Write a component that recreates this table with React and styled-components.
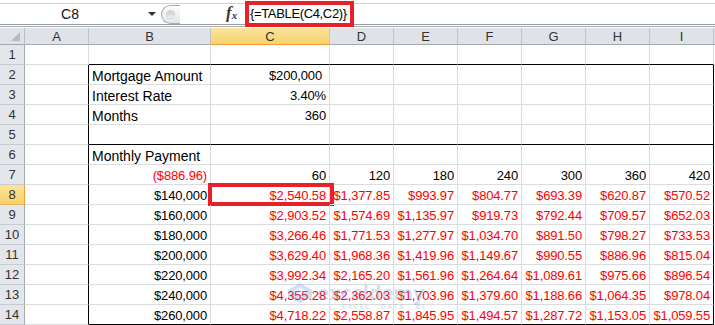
import React from 'react'
import styled, { createGlobalStyle } from 'styled-components'

const GlobalStyle = createGlobalStyle`
  html, body { margin: 0; padding: 0; background: #fff; }
  body { font-family: "Liberation Sans", Arial, sans-serif; overflow: hidden; }
`

const COLUMNS = ['A', 'B', 'C', 'D', 'E', 'F', 'G', 'H', 'I']
const TERMS = ['60', '120', '180', '240', '300', '360', '420']
const PAYMENTS = [
  ['$140,000', ['$2,540.58', '$1,377.85', '$993.97', '$804.77', '$693.39', '$620.87', '$570.52']],
  ['$160,000', ['$2,903.52', '$1,574.69', '$1,135.97', '$919.73', '$792.44', '$709.57', '$652.03']],
  ['$180,000', ['$3,266.46', '$1,771.53', '$1,277.97', '$1,034.70', '$891.50', '$798.27', '$733.53']],
  ['$200,000', ['$3,629.40', '$1,968.36', '$1,419.96', '$1,149.67', '$990.55', '$886.96', '$815.04']],
  ['$220,000', ['$3,992.34', '$2,165.20', '$1,561.96', '$1,264.64', '$1,089.61', '$975.66', '$896.54']],
  ['$240,000', ['$4,355.28', '$2,362.03', '$1,703.96', '$1,379.60', '$1,188.66', '$1,064.35', '$978.04']],
  ['$260,000', ['$4,718.22', '$2,558.87', '$1,845.95', '$1,494.57', '$1,287.72', '$1,153.05', '$1,059.55']],
]

const label = text => ({ text })
const num = (text, red = false, extra = {}) => ({ text, num: true, align: 'right', red, ...extra })

// content of row r, columns A..I
function rowCells(r) {
  const cells = Array(9).fill(null).map(() => ({}))
  if (r === 2) { cells[1] = label('Mortgage Amount'); cells[2] = num('$200,000', false, { trail: true }) }
  if (r === 3) { cells[1] = label('Interest Rate'); cells[2] = num('3.40%') }
  if (r === 4) { cells[1] = label('Months'); cells[2] = num('360') }
  if (r === 6) { cells[1] = label('Monthly Payment') }
  if (r === 7) {
    cells[1] = num('($886.96)', true)
    TERMS.forEach((t, i) => { cells[i + 2] = num(t) })
  }
  if (r >= 8) {
    const [amount, values] = PAYMENTS[r - 8]
    cells[1] = num(amount)
    values.forEach((v, i) => { cells[i + 2] = num(v, true, { mark: r === 8 && i === 0 }) })
  }
  cells.forEach((c, i) => {
    c.rb = r >= 2 && (i === 0 || i === 8)
    c.bb = i >= 1 && (r === 1 || r === 5 || r === 14)
  })
  return cells
}

const Page = styled.div`
  position: relative;
  width: 715px;
  height: 325px;
  overflow: hidden;
`

const TopBar = styled.div`
  height: 27px;
  box-sizing: border-box;
  padding-top: 3px;
  border-bottom: 1px solid #a7abb0;
`

const BarInner = styled.div`
  display: flex;
  align-items: center;
  height: 22px;
  box-sizing: border-box;
  border-top: 1px solid #cfd2d6;
  border-bottom: 1px solid #9b9fa5;
`

const NameBox = styled.div`
  display: flex;
  align-items: center;
  width: 157px;
  height: 100%;
`

const NameText = styled.span`
  width: 140px;
  text-align: center;
  font-size: 14px;
  color: #111;
`

const DropArrow = styled.span`
  margin-left: 8px;
  width: 0;
  height: 0;
  border-left: 4px solid transparent;
  border-right: 4px solid transparent;
  border-top: 4px solid #333;
`

const Splitter = styled.div`
  position: relative;
  margin-left: 4px;
  width: 19px;
  height: 19px;
  box-sizing: border-box;
  border: 1px solid #a8acb2;
  border-right: none;
  border-radius: 10px 0 0 10px;
  background: linear-gradient(#fdfdfd, #e3e5e8);
  &::after {
    content: '';
    position: absolute;
    left: 5px;
    top: 5px;
    width: 7px;
    height: 7px;
    border-radius: 50%;
    background: linear-gradient(#c9ccd0, #eceef0);
    box-shadow: 0 0 0 1px #d2d5d9;
  }
`

const Fx = styled.span`
  margin-left: 46px;
  width: 17px;
  font-family: "Liberation Serif", "Times New Roman", serif;
  font-style: italic;
  font-weight: bold;
  font-size: 17px;
  line-height: 18px;
  color: #3a3a3a;
  i { font-style: italic; }
  sub { font-size: 11px; vertical-align: -1px; }
`

const FormulaField = styled.div`
  position: relative;
  height: 20px;
  margin-left: 2px;
  padding-left: 5px;
  font-size: 13px;
  letter-spacing: -0.35px;
  line-height: 20px;
  color: #000;
`

const Highlight = styled.span`
  position: absolute;
  left: 0;
  top: -3px;
  width: 109px;
  height: 26px;
  box-sizing: border-box;
  border: 4px solid #e8202a;
`

const Sheet = styled.div`
  display: grid;
  grid-template-columns: 25px 64px 122px 119px repeat(6, 64px) 1fr;
  grid-template-rows: 17px repeat(14, 20px);
  margin-top: 1px;
`

const Corner = styled.div`
  position: relative;
  box-sizing: border-box;
  background: #dfe3e8;
  border-right: 1px solid #b9bec5;
  border-bottom: 1px solid #a3a9b1;
  &::after {
    content: '';
    position: absolute;
    right: 4px;
    bottom: 3px;
    border-left: 9px solid transparent;
    border-bottom: 9px solid #b7bbc1;
  }
`

const ColHead = styled.div`
  box-sizing: border-box;
  display: flex;
  align-items: center;
  justify-content: center;
  font-size: 13px;
  color: #333;
  background: ${p => (p.$active ? 'linear-gradient(#fae49c, #f7d26c)' : '#dfe3e8')};
  border-right: 1px solid ${p => (p.$active ? '#f2c36c' : '#bfc4cb')};
  border-bottom: 1px solid ${p => (p.$active ? '#f29b38' : '#a3a9b1')};
`

const RowHead = styled.div`
  box-sizing: border-box;
  display: flex;
  align-items: center;
  justify-content: center;
  font-size: 13px;
  color: #333;
  background: ${p => (p.$active ? 'linear-gradient(#fae49c, #f7d26c)' : '#e3e6ea')};
  border-right: 1px solid ${p => (p.$active ? '#f29b38' : '#a3a9b1')};
  border-bottom: 1px solid ${p => (p.$active ? '#f2b45a' : '#c8ccd2')};
`

const Cell = styled.div`
  position: relative;
  box-sizing: border-box;
  display: flex;
  align-items: flex-end;
  justify-content: ${p => (p.$align === 'right' ? 'flex-end' : 'flex-start')};
  padding: 0 ${p => (p.$trail ? '7px' : '3px')} 0 3px;
  border-right: 1px solid ${p => (p.$rb ? '#000' : '#dadcdd')};
  border-bottom: 1px solid ${p => (p.$bb ? '#000' : '#dadcdd')};
  font-size: ${p => (p.$num ? '13px' : '14px')};
  letter-spacing: ${p => (p.$num ? '-0.15px' : '0')};
  line-height: 16px;
  color: ${p => (p.$red ? '#ff0000' : '#000')};
  white-space: nowrap;
`

const CellMark = styled.span`
  position: absolute;
  left: -3px;
  top: -2px;
  width: 126px;
  height: 23px;
  box-sizing: border-box;
  border: 4px solid #e8202a;
`

const Watermark = styled.div`
  position: absolute;
  left: 287px;
  top: 282px;
  display: flex;
  gap: 3px;
  opacity: 0.28;
  pointer-events: none;
  color: #5b8fdc;
`

const WaterText = styled.div`
  display: flex;
  flex-direction: column;
  align-items: center;
  font-family: "Open Sans", sans-serif;
  font-weight: bold;
  font-size: 20px;
  line-height: 21px;
  small {
    font-size: 7px;
    line-height: 8px;
    letter-spacing: 1.5px;
    color: #8fa3bd;
    margin-left: 26px;
  }
`

export default function App() {
  const rows = Array.from({ length: 14 }, (_, i) => i + 1)
  return (
    <>
      <GlobalStyle />
      <Page>
        <TopBar>
          <BarInner>
            <NameBox>
              <NameText>C8</NameText>
              <DropArrow />
            </NameBox>
            <Splitter />
            <Fx><i>f</i><sub>x</sub></Fx>
            <FormulaField>
              {'{=TABLE(C4,C2)}'}
              <Highlight />
            </FormulaField>
          </BarInner>
        </TopBar>
        <Sheet>
          <Corner />
          {COLUMNS.map(c => (
            <ColHead key={c} $active={c === 'C'}>{c}</ColHead>
          ))}
          <ColHead />
          {rows.map(r => (
            <React.Fragment key={r}>
              <RowHead $active={r === 8}>{r}</RowHead>
              {rowCells(r).map((c, i) => (
                <Cell
                  key={i}
                  $align={c.align}
                  $num={c.num}
                  $red={c.red}
                  $trail={c.trail}
                  $rb={c.rb}
                  $bb={c.bb}
                >
                  {c.text}
                  {c.mark && <CellMark />}
                </Cell>
              ))}
              <Cell />
            </React.Fragment>
          ))}
        </Sheet>
        <Watermark>
          <svg width="26" height="22" viewBox="0 0 26 22">
            <path d="M13 1 L25 8 L25 15 L13 21 L1 15 L1 8 Z" fill="#5b8fdc" />
            <path d="M13 5 L20 9 L13 13 L6 9 Z" fill="#fff" opacity="0.6" />
          </svg>
          <WaterText>
            exceldemy
            <small>EXCEL · DATA · BI</small>
          </WaterText>
        </Watermark>
      </Page>
    </>
  )
}
